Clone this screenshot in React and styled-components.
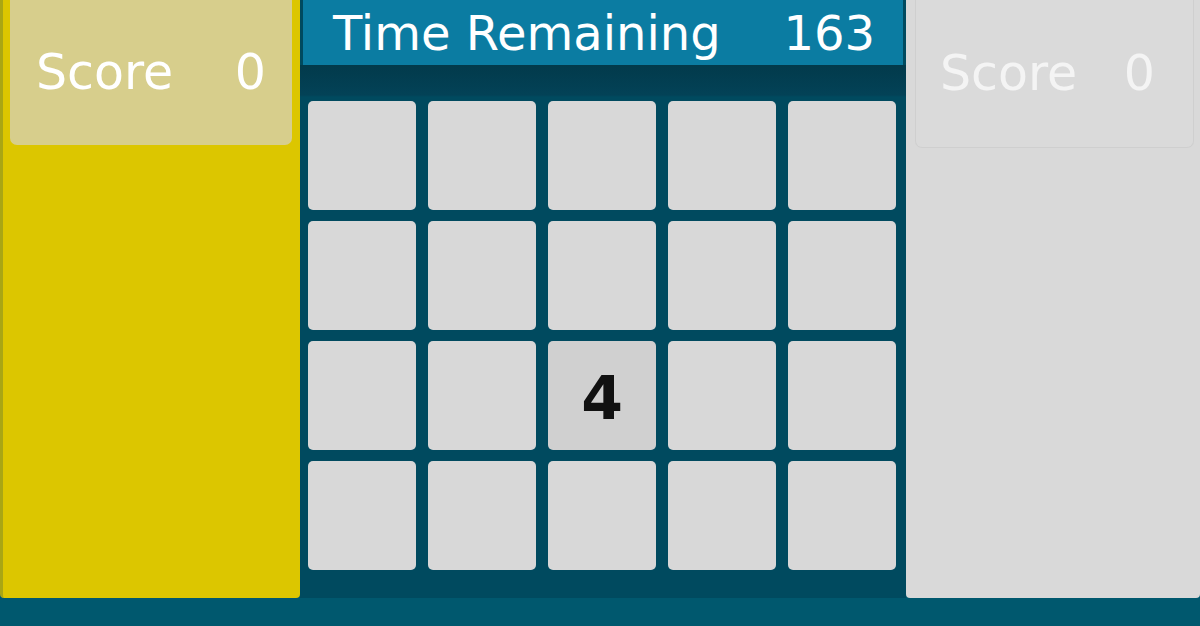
import React from "react";
import styled, { createGlobalStyle } from "styled-components";

const GlobalStyle = createGlobalStyle`
  html, body {
    margin: 0;
    padding: 0;
    background: #00586e;
    font-family: "DejaVu Sans", "Open Sans", sans-serif;
  }
`;

const Page = styled.div`
  width: 1200px;
  height: 626px;
  background: #00586e;
  overflow: hidden;
`;

const Board = styled.div`
  display: flex;
  height: 598px;
`;

const PlayerPanel = styled.div`
  box-sizing: border-box;
  width: ${(props) => props.width}px;
  height: 100%;
  background: ${(props) => props.bg};
  border-left: ${(props) => (props.edge ? `3px solid ${props.edge}` : "none")};
  border-radius: 0 0 4px 4px;
  padding: ${(props) => props.pad};
`;

const ScoreBox = styled.div`
  display: flex;
  justify-content: space-between;
  align-items: center;
  height: ${(props) => props.h}px;
  box-sizing: border-box;
  padding: 0 ${(props) => props.padRight}px 0 ${(props) => props.padLeft}px;
  background: ${(props) => props.bg};
  border: ${(props) => (props.border ? `1px solid ${props.border}` : "none")};
  border-top: none;
  border-radius: 0 0 7px 7px;
  color: ${(props) => props.color};
  font-size: 49px;
  line-height: 1;
`;

const Center = styled.div`
  width: 606px;
  height: 100%;
  display: flex;
  flex-direction: column;
  background: #004a5f;
`;

const TimerBar = styled.div`
  display: flex;
  justify-content: space-between;
  align-items: center;
  height: 65px;
  margin: 0 3px;
  padding: 0 28px 0 30px;
  background: #0b7ca2;
  color: #fff;
  font-size: 48px;
  line-height: 1;
  box-sizing: border-box;
`;

const GridArea = styled.div`
  flex: 1;
  padding: 36px 0 0 8px;
  background: linear-gradient(#023a4b 0, #034257 30px, #004a5f 32px);
`;

const Grid = styled.div`
  display: grid;
  grid-template-columns: repeat(5, 108px);
  grid-auto-rows: 109px;
  gap: 11px 12px;
`;

const Tile = styled.div`
  display: flex;
  align-items: center;
  justify-content: center;
  background: ${(props) => (props.value ? "#d0d0d0" : "#d8d8d8")};
  border-radius: 5px;
  color: #111;
  font-family: "DejaVu Sans", sans-serif;
  font-weight: bold;
  font-size: 60px;
  padding-top: 4px;
  box-sizing: border-box;
`;

const tiles = Array.from({ length: 20 }, (_, i) => (i === 12 ? 4 : null));

const App = () => {
  return (
    <Page>
      <GlobalStyle />
      <Board>
        <PlayerPanel width={300} bg="#dcc600" edge="#a9a614" pad="0 8px 0 7px">
          <ScoreBox h={145} bg="#d7ce8c" color="#fff" padLeft={26} padRight={26}>
            <span>Score</span>
            <span>0</span>
          </ScoreBox>
        </PlayerPanel>
        <Center>
          <TimerBar>
            <span>Time Remaining</span>
            <span>163</span>
          </TimerBar>
          <GridArea>
            <Grid>
              {tiles.map((v, i) => (
                <Tile key={i} value={v}>
                  {v}
                </Tile>
              ))}
            </Grid>
          </GridArea>
        </Center>
        <PlayerPanel width={294} bg="#d9d9d9" pad="0 6px 0 9px">
          <ScoreBox
            h={148}
            bg="#dadada"
            border="#cfcfcf"
            color="#f4f4f4"
            padLeft={24}
            padRight={38}
          >
            <span>Score</span>
            <span>0</span>
          </ScoreBox>
        </PlayerPanel>
      </Board>
    </Page>
  );
};

export default App;
